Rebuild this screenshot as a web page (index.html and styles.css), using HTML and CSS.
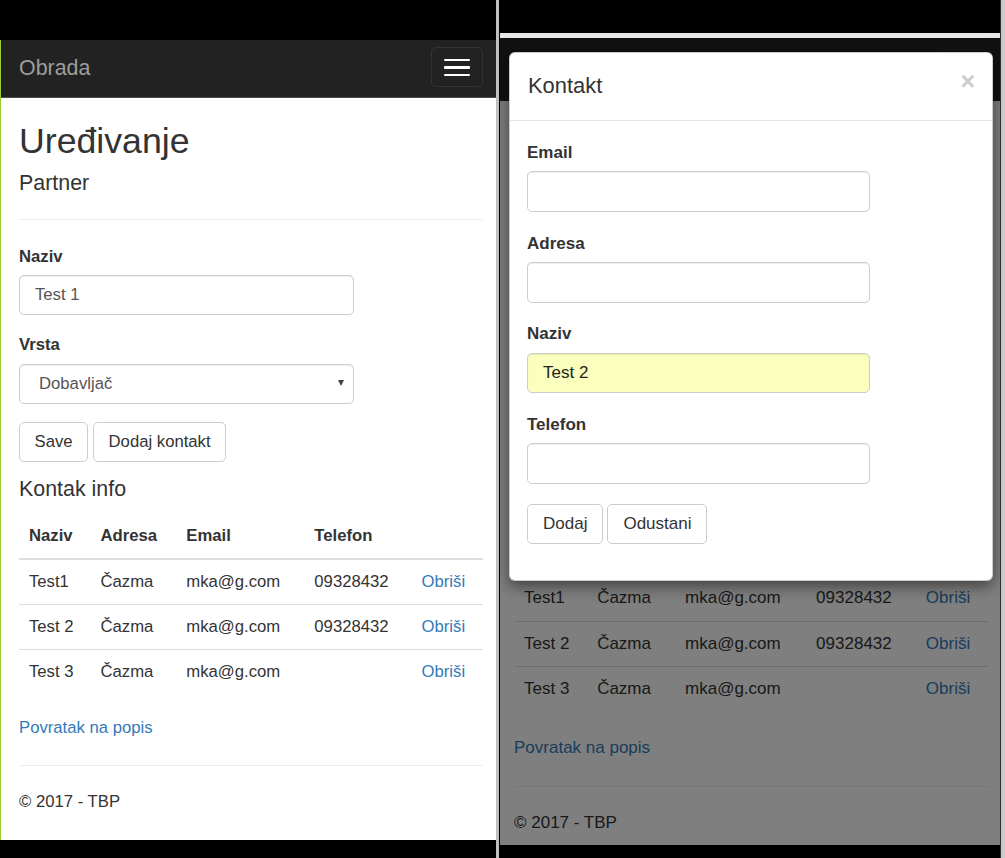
FILE: index.html
```html
<!DOCTYPE html>
<html lang="hr">
<head>
<meta charset="utf-8">
<title>Uređivanje - Obrada</title>
<link rel="stylesheet" href="styles.css">
</head>
<body>
<div class="shot shot--left">
  <div class="page">
    <nav class="navbar">
      <span class="brand">Obrada</span>
      <button class="toggle" type="button" aria-label="Izbornik"><span class="bar"></span><span class="bar"></span><span class="bar"></span></button>
    </nav>
    <main class="content">
      <h2 class="title">Uređivanje</h2>
      <h4 class="subtitle">Partner</h4>
      <hr class="rule rule--top">
      <div class="form-group">
        <label class="label">Naziv</label>
        <input class="field" type="text" value="Test 1">
      </div>
      <div class="form-group">
        <label class="label">Vrsta</label>
        <div class="select-wrap">
          <select class="field field--select"><option>Dobavljač</option></select>
          <span class="caret"></span>
        </div>
      </div>
      <div class="actions">
        <button class="btn" type="button">Save</button>
        <button class="btn" type="button">Dodaj kontakt</button>
      </div>
      <h4 class="subtitle subtitle--section">Kontak info</h4>
      <table class="table">
        <thead>
          <tr><th class="c1">Naziv</th><th class="c2">Adresa</th><th class="c3">Email</th><th class="c4">Telefon</th><th class="c5"></th></tr>
        </thead>
        <tbody>
          <tr><td>Test1</td><td>Čazma</td><td>mka@g.com</td><td>09328432</td><td><a class="link" href="#">Obriši</a></td></tr>
          <tr><td>Test 2</td><td>Čazma</td><td>mka@g.com</td><td>09328432</td><td><a class="link" href="#">Obriši</a></td></tr>
          <tr><td>Test 3</td><td>Čazma</td><td>mka@g.com</td><td></td><td><a class="link" href="#">Obriši</a></td></tr>
        </tbody>
      </table>
      <p class="back"><a class="link" href="#">Povratak na popis</a></p>
      <hr class="rule rule--footer">
      <footer class="footer"><p>© 2017 - TBP</p></footer>
    </main>
  </div>
</div>
<div class="divider"></div>
<div class="shot shot--right">
  <div class="chrome-strip"></div>
  <div class="page">
    <nav class="navbar">
      <span class="brand covered" aria-hidden="true">Obrada</span>
      <button class="toggle" type="button" aria-label="Izbornik"><span class="bar"></span><span class="bar"></span><span class="bar"></span></button>
    </nav>
    <main class="content">
      <div class="covered" aria-hidden="true">
        <h2 class="title">Uređivanje</h2>
        <h4 class="subtitle">Partner</h4>
        <hr class="rule rule--top">
        <div class="form-group">
          <label class="label">Naziv</label>
          <input class="field" type="text" value="Test 1">
        </div>
        <div class="form-group">
          <label class="label">Vrsta</label>
          <div class="select-wrap">
            <select class="field field--select"><option>Dobavljač</option></select>
            <span class="caret"></span>
          </div>
        </div>
        <div class="actions">
          <button class="btn" type="button">Save</button>
          <button class="btn" type="button">Dodaj kontakt</button>
        </div>
        <h4 class="subtitle subtitle--section">Kontak info</h4>
      </div>
      <table class="table">
        <thead class="covered">
          <tr><th class="c1">Naziv</th><th class="c2">Adresa</th><th class="c3">Email</th><th class="c4">Telefon</th><th class="c5"></th></tr>
        </thead>
        <tbody>
          <tr><td>Test1</td><td>Čazma</td><td>mka@g.com</td><td>09328432</td><td><a class="link" href="#">Obriši</a></td></tr>
          <tr><td>Test 2</td><td>Čazma</td><td>mka@g.com</td><td>09328432</td><td><a class="link" href="#">Obriši</a></td></tr>
          <tr><td>Test 3</td><td>Čazma</td><td>mka@g.com</td><td></td><td><a class="link" href="#">Obriši</a></td></tr>
        </tbody>
      </table>
      <p class="back"><a class="link" href="#">Povratak na popis</a></p>
      <hr class="rule rule--footer">
      <footer class="footer"><p>© 2017 - TBP</p></footer>
    </main>
    <div class="backdrop"></div>
    <div class="modal" role="dialog" aria-label="Kontakt">
      <div class="modal-header">
        <h4 class="modal-title">Kontakt</h4>
        <button class="close" type="button" aria-label="Zatvori">×</button>
      </div>
      <div class="modal-body">
        <div class="form-group">
          <label class="label">Email</label>
          <input class="field" type="text">
        </div>
        <div class="form-group">
          <label class="label">Adresa</label>
          <input class="field" type="text">
        </div>
        <div class="form-group">
          <label class="label">Naziv</label>
          <input class="field field--autofill" type="text" value="Test 2">
        </div>
        <div class="form-group">
          <label class="label">Telefon</label>
          <input class="field" type="text">
        </div>
        <div class="actions">
          <button class="btn" type="button">Dodaj</button>
          <button class="btn" type="button">Odustani</button>
        </div>
      </div>
    </div>
  </div>
</div>
<div class="edge"></div>
</body>
</html>
```
FILE: styles.css
```css
* { box-sizing: border-box; }
html, body { margin: 0; }
body {
  display: flex;
  width: 1005px;
  height: 858px;
  overflow: hidden;
  background: #000;
  font-family: "Liberation Sans", Arial, Helvetica, sans-serif;
  color: #333;
}

/* screenshot frames */
.shot { flex: none; display: flex; flex-direction: column; }
.shot--left { width: 496px; padding-top: 40px; }
.shot--right { width: 500px; padding-top: 33px; }
.divider { flex: none; width: 3px; margin-right: 1px; background: #bfbfbf; }
.edge { flex: none; width: 5px; border-left: 1px solid #2e2e2e; background: #c9c9c9; }
.chrome-strip { height: 5px; background: #e6e6e6; }

/* page */
.page {
  position: relative;
  overflow: hidden;
  background: #fff;
  font-size: 16.7px;
  line-height: 23.86px;
}
.shot--left .page { height: 800px; border-left: 1px solid #9acd32; }
.shot--right .page { height: 807px; font-size: 17px; line-height: 24.3px; }

/* content hidden behind the open modal */
.covered { visibility: hidden; }

/* navbar */
.navbar {
  display: flex;
  justify-content: space-between;
  align-items: flex-start;
  height: 58px;
  padding: 0 13px 0 18px;
  background: #222;
  border-bottom: 1px solid #4a4a4a;
}
.shot--right .navbar { height: 63px; padding: 0 11px 0 14px; border-bottom: 0; }
.brand { padding-top: 16px; font-size: 21.4px; line-height: 24px; color: #9d9d9d; }
.toggle {
  display: flex;
  flex-direction: column;
  gap: 4.9px;
  width: 52px;
  height: 40px;
  margin-top: 7px;
  padding: 11px 12px 0;
  border: 1px solid #333;
  border-radius: 5px;
  background: transparent;
}
.shot--right .toggle { margin-top: 11px; }
.bar { display: block; height: 2.4px; border-radius: 1px; background: #fff; }

/* content */
.content { padding: 0 13px 0 18px; }
.shot--right .content { padding: 12px 11px 0 14px; }
.title { margin: 24px 0 10.5px; font-size: 35.7px; line-height: 39px; font-weight: 500; }
.subtitle { margin: 0; font-size: 21.4px; line-height: 23.5px; font-weight: 500; }
.subtitle--section { margin: 0 0 12.5px; }
.rule { margin: 0; border: 0; border-top: 1px solid #eee; }
.rule--top { margin: 24px 0 25px; }
.rule--footer { margin: 25px 0 24px; }

.form-group { margin-bottom: 18px; }
.label { display: block; margin-bottom: 6.5px; font-weight: bold; }
.field {
  display: block;
  width: 335px;
  height: 40px;
  padding: 0 15px;
  border: 1px solid #ccc;
  border-radius: 5px;
  background: #fff;
  box-shadow: inset 0 1px 1px rgba(0, 0, 0, .075);
  font: inherit;
  color: #555;
}
.select-wrap { position: relative; width: 335px; }
.field--select { appearance: none; -webkit-appearance: none; padding-left: 19px; }
.caret {
  position: absolute;
  right: 10px;
  top: 16.5px;
  width: 0;
  height: 0;
  border-left: 3.5px solid transparent;
  border-right: 3.5px solid transparent;
  border-top: 6px solid #444;
}

.actions { display: flex; gap: 5px; margin-top: 1px; margin-bottom: 16.5px; }
.btn {
  height: 40px;
  padding: 0 14.5px;
  border: 1px solid #ccc;
  border-radius: 5px;
  background: #fff;
  font: inherit;
  color: #333;
}

/* table */
.table { width: 100%; border-collapse: collapse; margin-bottom: 22px; }
.shot--right .table { margin-bottom: 25px; }
.table th, .table td { padding: 10px; text-align: left; vertical-align: top; }
.table th { font-weight: bold; border-bottom: 2px solid #ddd; }
.table td { border-top: 1px solid #ddd; }
.c1 { width: 15.4%; }
.c2 { width: 18.5%; }
.c3 { width: 27.6%; }
.c4 { width: 23.1%; }
.c5 { width: 15.4%; }

.link { color: #337ab7; text-decoration: none; }
.back { margin: 0; }
.footer p { margin: 0; }

/* modal */
.backdrop { position: absolute; inset: 0; background: rgba(0, 0, 0, .5); }
.modal {
  position: absolute;
  left: 9px;
  top: 14px;
  width: 484px;
  background: #fff;
  border: 1px solid rgba(0, 0, 0, .2);
  border-radius: 6px;
  box-shadow: 0 5px 15px rgba(0, 0, 0, .5);
  color: #333;
}
.modal-header {
  display: flex;
  justify-content: space-between;
  align-items: flex-start;
  padding: 17px 17px 18.6px 18px;
  border-bottom: 1px solid #e5e5e5;
}
.modal-title { margin: 0; font-size: 21.9px; line-height: 31.3px; font-weight: 500; }
.close {
  margin-top: -1.5px;
  padding: 0;
  border: 0;
  background: none;
  font-family: inherit;
  font-size: 25px;
  font-weight: bold;
  line-height: 25px;
  color: #000;
  opacity: .2;
}
.modal-body { padding: 20px 18px 18px 17px; }
.modal-body .form-group { margin-bottom: 19.7px; }
.modal-body .label { margin-bottom: 6.2px; }
.modal-body .field { width: 343px; height: 40.5px; }
.field--autofill { background: #faffbd; color: #222; }
.modal-body .actions { gap: 4px; margin: 0 0 18px; }
.modal-body .btn { height: 40.5px; padding: 0 15px; }
```
